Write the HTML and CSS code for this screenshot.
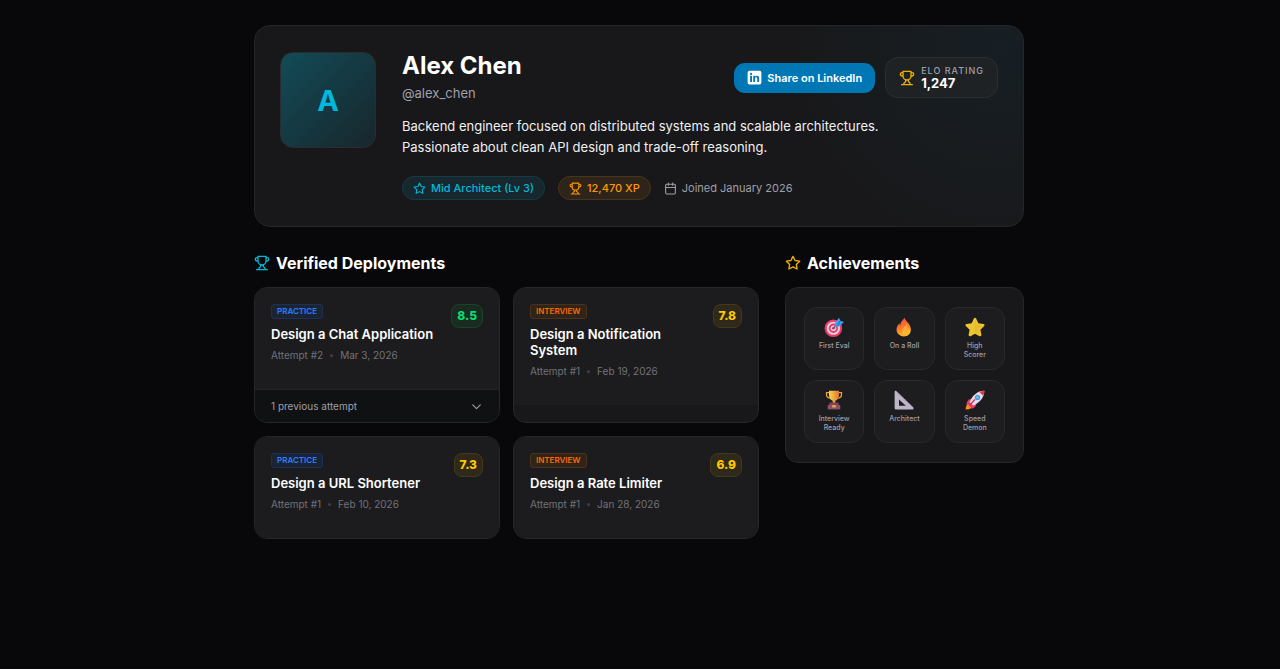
FILE: index.html
```html
<!DOCTYPE html>
<html lang="en">
<head>
<meta charset="utf-8">
<meta name="viewport" content="width=device-width, initial-scale=1">
<title>Alex Chen</title>
<link rel="stylesheet" href="styles.css">
</head>
<body>
<svg class="defs" aria-hidden="true">
  <symbol id="trophy" viewBox="0 0 24 24"><path d="M6 9H4.500a2.500 2.500 0 0 1 0-5H6M18 9h1.500a2.500 2.500 0 0 0 0-5H18M4 22h16M10 14.660V17c0 .550-.470.980-.970 1.210C7.850 18.750 7 20.240 7 22M14 14.660V17c0 .550.470.980.970 1.210C16.150 18.750 17 20.240 17 22M18 2H6v7a6 6 0 0 0 12 0V2Z"/></symbol>
  <symbol id="star" viewBox="0 0 24 24"><path d="M12 2l3.090 6.260L22 9.270l-5 4.870 1.180 6.880L12 17.770l-6.180 3.250L7 14.140 2 9.270l6.910-1.010z"/></symbol>
</svg>
<main class="page">
  <header class="profile">
    <div class="avatar">A</div>
    <div class="info">
      <div class="top">
        <div>
          <h1 class="name">Alex Chen</h1>
          <p class="handle">@alex_chen</p>
        </div>
        <div class="actions">
          <button class="share" type="button">
            <svg class="icon-sm" viewBox="0 0 24 24" aria-hidden="true"><path fill="#fff" fill-rule="evenodd" d="M4 1h16a3 3 0 0 1 3 3v16a3 3 0 0 1-3 3H4a3 3 0 0 1-3-3V4a3 3 0 0 1 3-3ZM5 9.300v10h3v-10ZM6.500 4.500a1.800 1.800 0 1 0 0 3.600 1.800 1.800 0 0 0 0-3.600ZM10 9.300v10h3v-5.500c0-2.600 3.400-2.800 3.400 0v5.500h3v-6.300c0-4.700-5-4.600-6.400-2.200V9.300Z"/></svg>
            Share on LinkedIn
          </button>
          <div class="elo">
            <svg class="icon line gold" aria-hidden="true"><use href="#trophy"/></svg>
            <div>
              <div class="elo-label">ELO RATING</div>
              <div class="elo-value">1,247</div>
            </div>
          </div>
        </div>
      </div>
      <p class="bio">Backend engineer focused on distributed systems and scalable architectures. Passionate about clean API design and trade-off reasoning.</p>
      <div class="facts">
        <span class="pill cyan"><svg class="icon-xs line" aria-hidden="true"><use href="#star"/></svg>Mid Architect (Lv 3)</span>
        <span class="pill amber"><svg class="icon-xs line" aria-hidden="true"><use href="#trophy"/></svg>12,470 XP</span>
        <span class="joined"><svg class="icon-xs line" viewBox="0 0 24 24" aria-hidden="true"><rect x="3" y="4" width="18" height="18" rx="2"/><path d="M8 2v4M16 2v4M3 10h18"/></svg>Joined January 2026</span>
      </div>
    </div>
  </header>

  <div class="columns">
    <section>
      <h2 class="heading"><svg class="icon line teal" aria-hidden="true"><use href="#trophy"/></svg>Verified Deployments</h2>
      <div class="cards">
        <article class="card">
          <div class="card-body">
            <div class="card-text">
              <span class="tag practice">PRACTICE</span>
              <h3 class="title">Design a Chat Application</h3>
              <p class="meta">Attempt #2<i class="dot"></i>Mar 3, 2026</p>
            </div>
            <span class="score good">8.5</span>
          </div>
          <button class="more" type="button">1 previous attempt<svg class="icon-xs line" viewBox="0 0 24 24" aria-hidden="true"><path d="M5 9l7 7 7-7"/></svg></button>
        </article>
        <article class="card">
          <div class="card-body">
            <div class="card-text">
              <span class="tag interview">INTERVIEW</span>
              <h3 class="title">Design a Notification System</h3>
              <p class="meta">Attempt #1<i class="dot"></i>Feb 19, 2026</p>
            </div>
            <span class="score fair">7.8</span>
          </div>
        </article>
        <article class="card">
          <div class="card-body">
            <div class="card-text">
              <span class="tag practice">PRACTICE</span>
              <h3 class="title">Design a URL Shortener</h3>
              <p class="meta">Attempt #1<i class="dot"></i>Feb 10, 2026</p>
            </div>
            <span class="score fair">7.3</span>
          </div>
        </article>
        <article class="card">
          <div class="card-body">
            <div class="card-text">
              <span class="tag interview">INTERVIEW</span>
              <h3 class="title">Design a Rate Limiter</h3>
              <p class="meta">Attempt #1<i class="dot"></i>Jan 28, 2026</p>
            </div>
            <span class="score fair">6.9</span>
          </div>
        </article>
      </div>
    </section>

    <section>
      <h2 class="heading"><svg class="icon line gold" aria-hidden="true"><use href="#star"/></svg>Achievements</h2>
      <ul class="badges">
        <li class="badge">
          <svg class="emoji" viewBox="0 0 32 32" aria-hidden="true"><circle cx="15" cy="18" r="14" fill="#f03a68"/><circle cx="15" cy="18" r="10.500" fill="#d9d5e4"/><circle cx="15" cy="18" r="7.500" fill="#f03a68"/><circle cx="15" cy="18" r="4.500" fill="#d9d5e4"/><circle cx="15" cy="18" r="2" fill="#c92b58"/><path d="M15 18L24 9" stroke="#5a4f75" stroke-width="2"/><path d="M18 9l6-8 2 5 6 2-8 7-6 1z" fill="#3aa5f2"/><path d="M20 14l6-8M26 6l-3 8" stroke="#1764b5" stroke-width="1"/></svg>
          First Eval</li>
        <li class="badge">
          <svg class="emoji" viewBox="0 0 32 32" aria-hidden="true"><defs><linearGradient id="fire" x2="0.300" y2="1"><stop offset="0" stop-color="#f04436"/><stop offset=".6" stop-color="#fb7b2c"/><stop offset="1" stop-color="#ffb52e"/></linearGradient></defs><path d="M17 1c1 6 10 9 10 19 0 7-5 11-11 11S4 27 4 20c0-5 3-8 5-10 0 2 0 3 1 4 0-6 4-9 7-13Z" fill="url(#fire)"/><path d="M20 10c-1 5-7 7-7 14 0 4 3 6 6 6 7 0 8-7 5-12-1 2-2 3-3 3 1-4 0-7-1-11Z" fill="#ffbb35" opacity=".65"/></svg>
          On a Roll</li>
        <li class="badge">
          <svg class="emoji" viewBox="0 0 32 32" aria-hidden="true"><path d="M14.200 2.500c.7-1.600 2.900-1.600 3.600 0l3.500 7.600 8.200 1c1.700.2 2.400 2.200 1.200 3.400l-6.100 5.700 1.600 8.300c.3 1.700-1.400 2.900-2.900 2.100L16 26.600l-7.300 4c-1.500.8-3.200-.4-2.900-2.100l1.600-8.300-6.100-5.700c-1.200-1.200-.5-3.200 1.200-3.400l8.200-1z" fill="#edc531"/><path d="M16 4l2 8 10 2-7 6 2 8-7-4z" fill="#d9a92b" opacity=".35"/></svg>
          High Scorer</li>
        <li class="badge">
          <svg class="emoji" viewBox="0 0 32 32" aria-hidden="true"><defs><linearGradient id="cup"><stop stop-color="#ffd34c"/><stop offset="1" stop-color="#d87932"/></linearGradient></defs><path d="M9 4H4v3c0 4 2 6 7 6M23 4h5v3c0 4-2 6-7 6" fill="none" stroke="#e9a23c" stroke-width="2"/><path d="M8 1h16v7c0 5-2 8-6 9v5h-4v-5c-4-1-6-4-6-9z" fill="url(#cup)"/><path d="M9 20h14l1 4H8z" fill="#7b4458"/><path d="M6 24h20v7H6z" fill="#8d5268"/><path d="M13 24h6v4h-6z" fill="#e6a243"/></svg>
          Interview Ready</li>
        <li class="badge">
          <svg class="emoji" viewBox="0 0 32 32" aria-hidden="true"><path fill-rule="evenodd" fill="#bcb5c8" d="M1 3c0-2 2-2 3-1l27 26c1 1 0 3-1 3H3c-1 0-2-1-2-2zM8 15v10h11z"/><path d="M6 4l24 23" stroke="#8d68bb" stroke-width="1.500" stroke-dasharray="2 2"/></svg>
          Architect</li>
        <li class="badge">
          <svg class="emoji" viewBox="0 0 32 32" aria-hidden="true"><path d="M8 21c-5 0-7 5-7 10 5 0 10-1 10-6z" fill="#fa8b2b"/><path d="M11 14c-6 0-8 5-9 9l7-2zM18 21c0 6-4 8-8 9l1-7z" fill="#f0386b"/><path d="M7 20C12 8 20 1 31 1c0 11-8 19-18 24z" fill="#dfdae8"/><path d="M23 3c3-1 6-2 8-2 0 3-1 6-2 8z" fill="#ef314d"/><path d="M7 19l7 7-5 1-4-3z" fill="#f0386b"/><path d="M16 15L8 24" stroke="#cc285b" stroke-width="2"/><circle cx="20" cy="12" r="4" fill="#368fd5"/><circle cx="20" cy="12" r="2.300" fill="#69c4f5"/></svg>
          Speed Demon</li>
      </ul>
    </section>
  </div>
</main>
</body>
</html>
```
FILE: styles.css
```css
* { box-sizing: border-box; }
body {
  margin: 0;
  background: #08080a;
  color: #fff;
  font-family: Inter, "Liberation Sans", sans-serif;
}
h1, h2, h3, p, ul { margin: 0; padding: 0; }
svg { flex: none; }
button { font-family: inherit; cursor: pointer; }
.defs { display: block; width: 0; height: 0; }
.line {
  fill: none;
  stroke: currentColor;
  stroke-width: 2;
  stroke-linecap: round;
  stroke-linejoin: round;
}
.icon { width: 16px; height: 16px; }
.icon-sm { width: 15px; height: 15px; }
.icon-xs { width: 13px; height: 13px; }
.gold { color: #efb100; }
.teal { color: #00b8db; }

.page { max-width: 802px; margin: 0 auto; padding: 25px 17px 25px 15px; }

.profile {
  display: flex;
  gap: 26px;
  padding: 26px 25px;
  border: 1px solid #262628;
  border-radius: 16px;
  background: radial-gradient(circle at 97% 10%, #171f24 0, #18181a 208px);
}
.avatar {
  display: flex;
  flex: none;
  align-items: center;
  justify-content: center;
  width: 96px;
  height: 96px;
  border: 1px solid #2b2c2f;
  border-radius: 13px;
  background: linear-gradient(135deg, #124b57, #18262c);
  color: #00b8db;
  font-size: 29px;
  font-weight: 700;
}
.info { flex: 1; min-width: 0; }
.top { display: flex; justify-content: space-between; align-items: center; }
.name { font-size: 24px; line-height: 28px; font-weight: 700; }
.handle { margin-top: 3px; color: #9f9fa9; font-size: 13px; line-height: 20px; }
.actions { display: flex; align-items: center; gap: 10px; }
.share {
  display: flex;
  align-items: center;
  gap: 5px;
  height: 30px;
  padding: 0 13px;
  border: 0;
  border-radius: 11px;
  background: #0077b5;
  color: #fff;
  font-size: 11px;
  font-weight: 600;
}
.elo {
  display: flex;
  align-items: center;
  gap: 6px;
  padding: 7px 13px;
  border: 1px solid #2b2f32;
  border-radius: 13px;
  background: #1e2225;
}
.elo-label { color: #9f9fa9; font-size: 9px; line-height: 12px; font-weight: 500; letter-spacing: 1px; }
.elo-value { font-size: 13px; line-height: 13px; font-weight: 700; }
.bio { max-width: 540px; margin-top: 13px; color: #f0f0f2; font-size: 13px; line-height: 21px; }
.facts { display: flex; align-items: center; gap: 13px; margin-top: 18px; }
.pill, .joined { display: flex; align-items: center; gap: 5px; font-size: 11px; line-height: 22px; }
.pill { padding: 0 10px; border: 1px solid; border-radius: 12px; font-weight: 500; }
.cyan { border-color: #153c46; background: #16272d; color: #00b8db; }
.amber { border-color: #49351a; background: #2e2419; color: #fe9a00; }
.joined { color: #9f9fa9; }

.columns {
  display: grid;
  grid-template-columns: minmax(0, 505fr) minmax(0, 239fr);
  align-items: start;
  gap: 26px;
  margin-top: 25px;
}
.heading {
  display: flex;
  align-items: center;
  gap: 6px;
  font-size: 16px;
  line-height: 22px;
  font-weight: 700;
}
.cards { display: grid; grid-template-columns: 1fr 1fr; gap: 13px; margin-top: 13px; }
.card {
  display: flex;
  flex-direction: column;
  overflow: hidden;
  border: 1px solid #262628;
  border-radius: 13px;
  background: #18181a;
}
.card-body {
  display: flex;
  align-items: flex-start;
  justify-content: space-between;
  gap: 13px;
  padding: 16px 16px 26px;
  background: #1c1c1e;
}
.tag {
  display: block;
  width: fit-content;
  padding: 0 5px;
  border: 1px solid;
  border-radius: 3px;
  font-size: 8px;
  line-height: 13px;
  font-weight: 600;
}
.practice { border-color: #1c3155; background: #1b2435; color: #2b7fff; }
.interview { border-color: #4b331b; background: #30231a; color: #ff6900; }
.title { margin-top: 7px; font-size: 13px; line-height: 16px; font-weight: 600; }
.meta { display: flex; align-items: center; margin-top: 5px; color: #71717b; font-size: 10px; line-height: 16px; }
.dot { width: 3px; height: 3px; margin: 0 7px; border-radius: 50%; background: #3f3f46; }
.score {
  padding: 0 5px;
  border: 1px solid;
  border-radius: 8px;
  font-size: 12px;
  line-height: 22px;
  font-weight: 800;
}
.good { border-color: #184428; background: #1a2b21; color: #05df72; }
.fair { border-color: #463919; background: #2f291b; color: #fdc700; }
.more {
  display: flex;
  align-items: center;
  justify-content: space-between;
  padding: 0 16px;
  border: 0;
  border-top: 1px solid #242426;
  background: #101113;
  color: #9f9fa9;
  font-size: 10px;
  line-height: 32px;
}
.badges {
  display: grid;
  grid-template-columns: repeat(3, minmax(0, 1fr));
  gap: 10px;
  margin-top: 13px;
  padding: 19px 18px;
  border: 1px solid #262628;
  border-radius: 13px;
  background: #18181a;
  list-style: none;
}
.badge {
  display: flex;
  flex-direction: column;
  align-items: center;
  gap: 4px;
  min-height: 63px;
  padding: 9px 11px;
  border: 1px solid #29292c;
  border-radius: 13px;
  background: #1d1d20;
  color: #9f9fa9;
  font-size: 7px;
  line-height: 9px;
  font-weight: 500;
  text-align: center;
}
.emoji { width: 20px; height: 20px; }

@media (max-width: 760px) {
  .columns { grid-template-columns: 1fr; }
  .top, .facts { flex-wrap: wrap; }
}
```
